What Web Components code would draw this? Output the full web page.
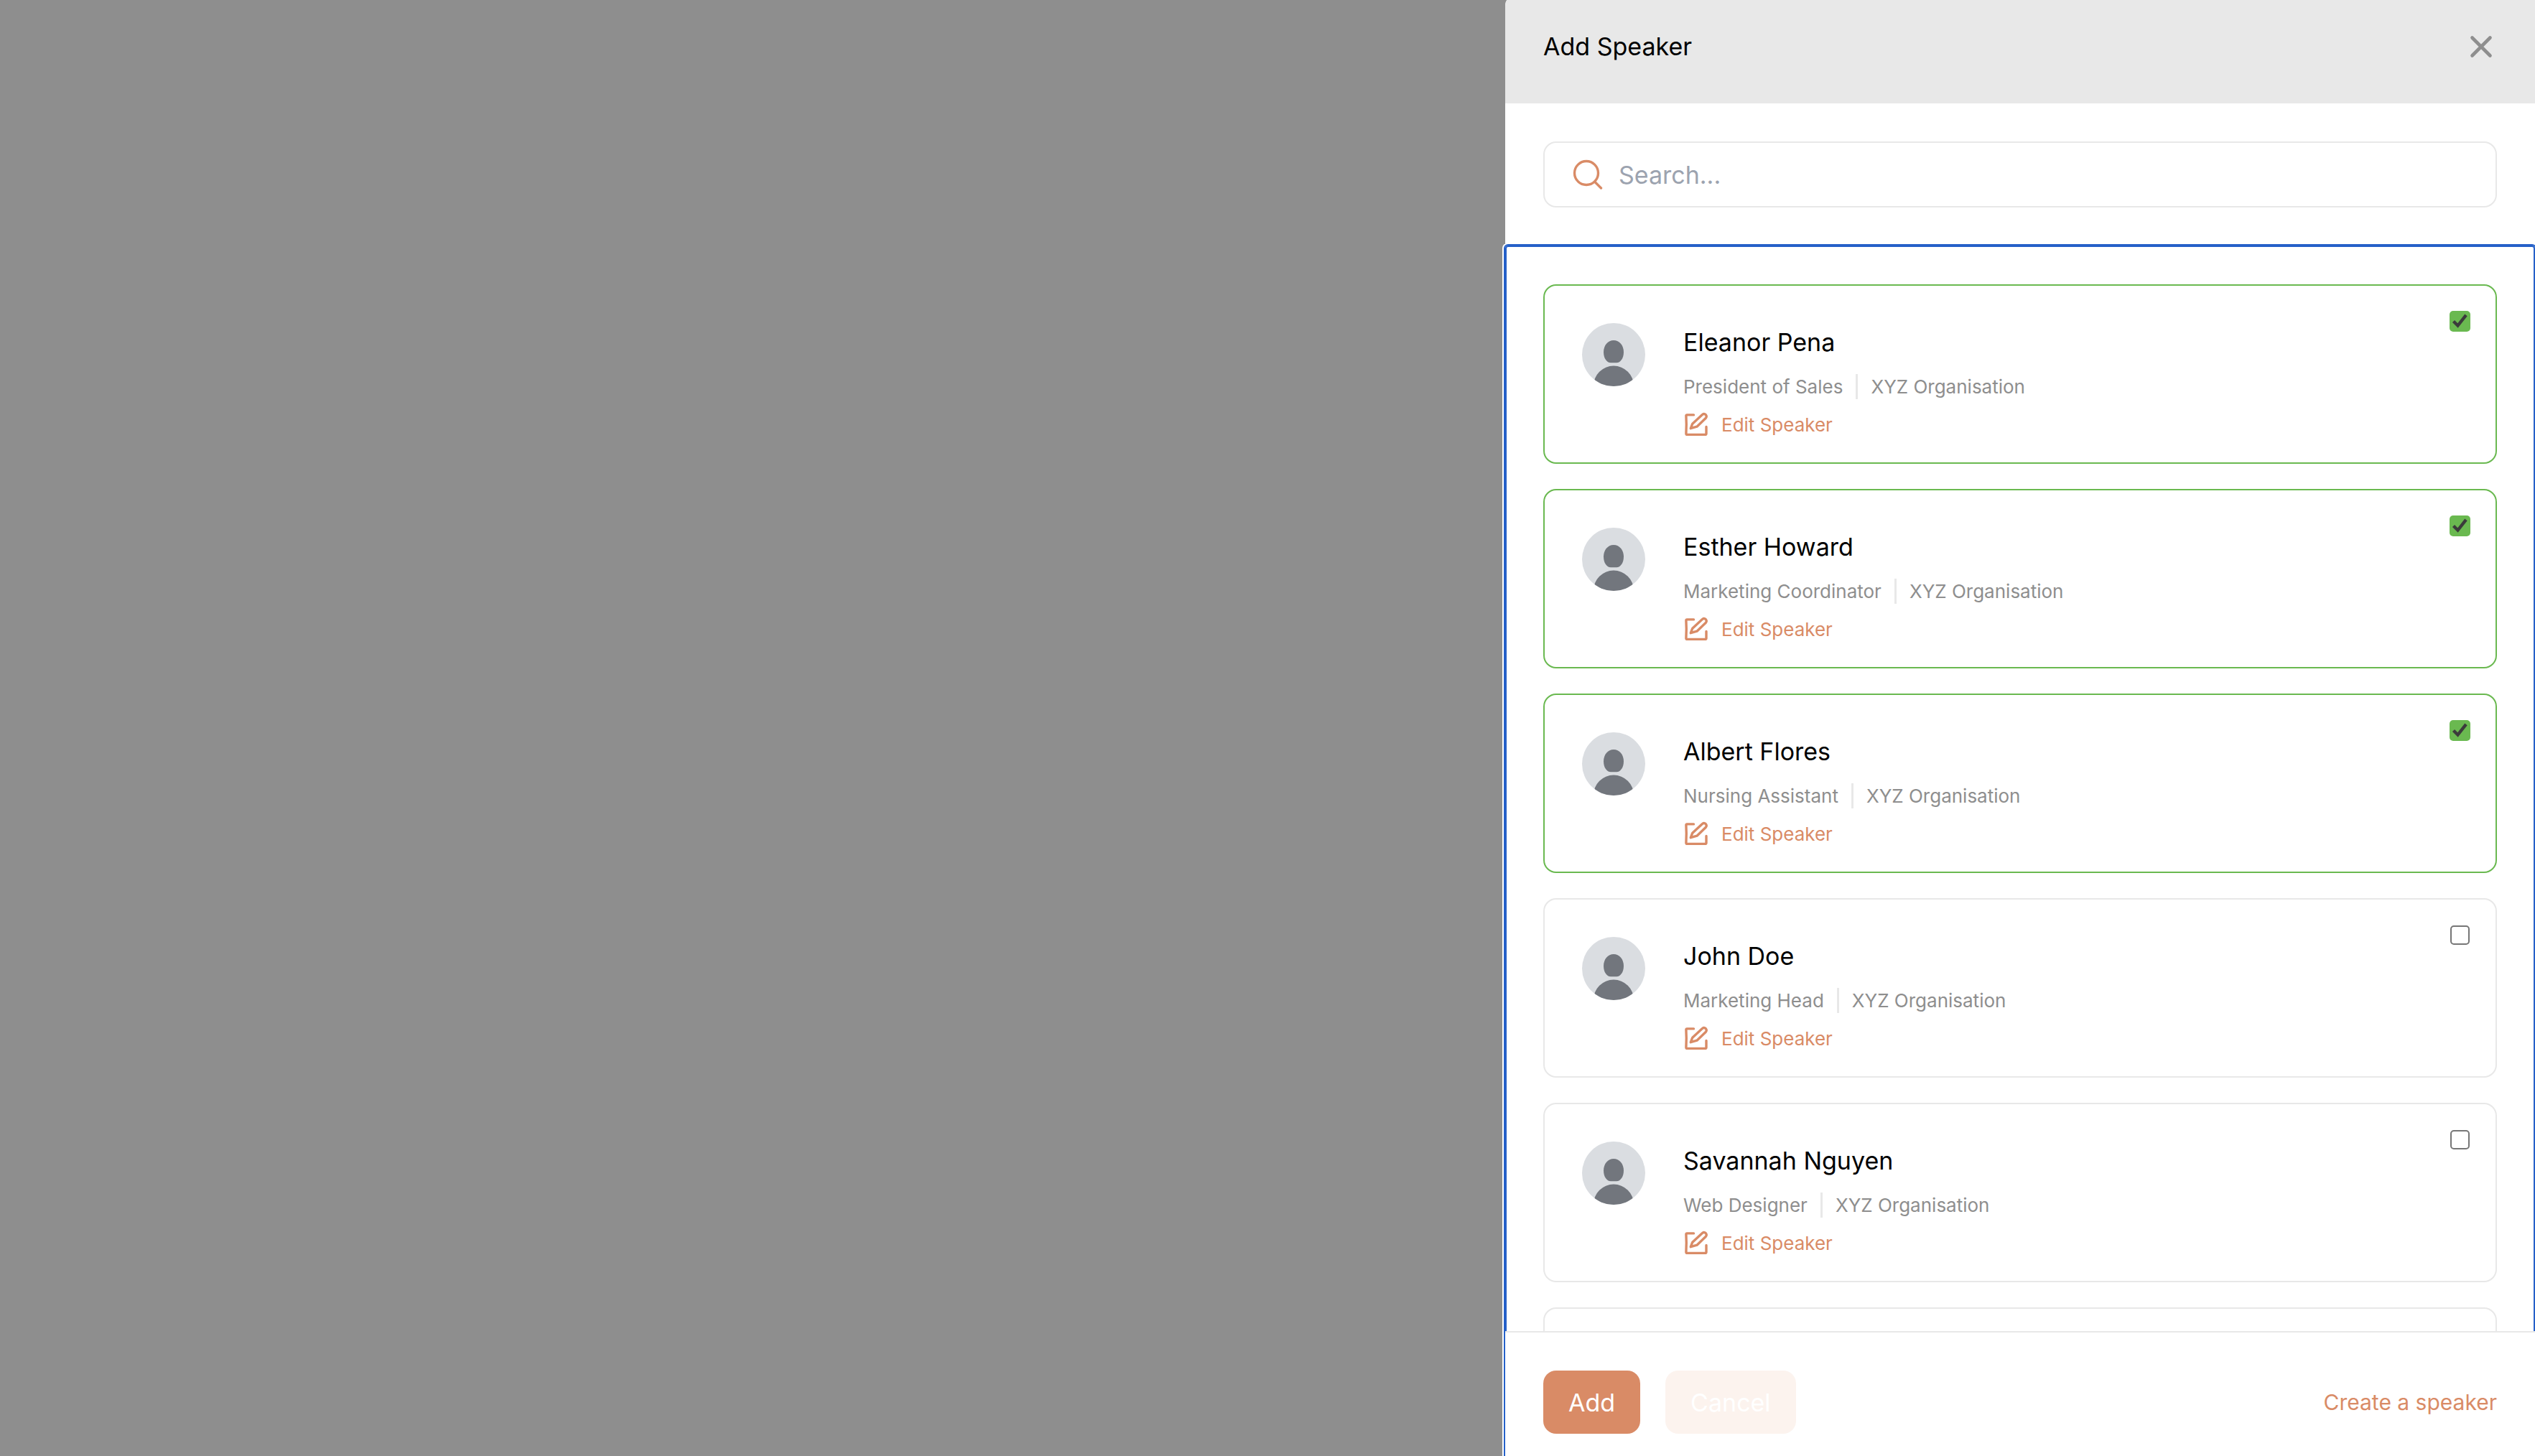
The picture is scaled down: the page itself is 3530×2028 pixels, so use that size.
<!DOCTYPE html>
<html lang="en">
<head>
<meta charset="utf-8">
<title>Add Speaker</title>
<style>
  :root {
    --accent: #d98b66;
    --line: #e8e8e8;
    --muted: #8e8e8e;
    --green: #6ab950;
  }
  html, body { height: 100%; }
  body {
    margin: 0;
    background: #8e8e8e;
    font-family: Inter, "Liberation Sans", sans-serif;
    font-size: 34px;
    color: #000;
  }
</style>
</head>
<body>
<speaker-drawer>
  <drawer-header slot="header">Add Speaker</drawer-header>
  <search-field slot="search"></search-field>
  <speaker-card checked>
    <span slot="name">Eleanor Pena</span><span slot="job">President of Sales</span><span slot="org">XYZ Organisation</span>
  </speaker-card>
  <speaker-card checked>
    <span slot="name">Esther Howard</span><span slot="job">Marketing Coordinator</span><span slot="org">XYZ Organisation</span>
  </speaker-card>
  <speaker-card checked>
    <span slot="name">Albert Flores</span><span slot="job">Nursing Assistant</span><span slot="org">XYZ Organisation</span>
  </speaker-card>
  <speaker-card>
    <span slot="name">John Doe</span><span slot="job">Marketing Head</span><span slot="org">XYZ Organisation</span>
  </speaker-card>
  <speaker-card>
    <span slot="name">Savannah Nguyen</span><span slot="job">Web Designer</span><span slot="org">XYZ Organisation</span>
  </speaker-card>
  <speaker-card-pending></speaker-card-pending>
  <drawer-footer slot="footer"></drawer-footer>
</speaker-drawer>

<script>
function define(name, html, setup) {
  const template = document.createElement('template');
  template.innerHTML = '<style>*{box-sizing:border-box}button,input{font:inherit;margin:0}button{border:0;padding:0;background:none;cursor:pointer}svg{display:block;flex:none}</style>' + html;
  customElements.define(name, class extends HTMLElement {
    constructor() {
      super();
      this.attachShadow({ mode: 'open' }).append(template.content.cloneNode(true));
    }
    connectedCallback() { if (setup) setup(this, this.shadowRoot); }
  });
}

define('speaker-drawer', `
  <style>
    :host { display: grid; grid-template-columns: 1048fr 717fr; height: 100vh; overflow: hidden; }
    .drawer { grid-column: 2; min-width: 0; display: flex; flex-direction: column; background: #fff; border-top-left-radius: 3px 9px; height: 100vh; }
    .search { padding: 53px; }
    .body {
      flex: 1; min-height: 0; display: flex; flex-direction: column; background: #fff;
      border-radius: 4px 4px 0 0;
      box-shadow: 0 0 0 2px #2560c8, 0 0 0 4px #fff, inset 0 0 0 2px #2560c8;
      clip-path: inset(-2px 0 0 -4px);
    }
    .list { flex: 1; min-height: 0; overflow: hidden; display: flex; flex-direction: column; gap: 35px; padding: 54px 53px 0; }
  </style>
  <section class="drawer" role="dialog" aria-label="Add Speaker">
    <slot name="header"></slot>
    <div class="search"><slot name="search"></slot></div>
    <div class="body">
      <div class="list"><slot></slot></div>
      <slot name="footer"></slot>
    </div>
  </section>`);

define('drawer-header', `
  <style>
    :host { display: block; background: var(--line); border-top-left-radius: 3px 9px; }
    header { display: flex; justify-content: space-between; align-items: center; padding: 43px 53px 57px; }
    h1 { margin: 0; font-size: 34px; font-weight: 400; line-height: 44px; }
  </style>
  <header>
    <h1><slot></slot></h1>
    <button type="button" aria-label="Close">
      <svg width="44" height="44" viewBox="0 0 44 44" fill="none" stroke="#8e8e8e" stroke-width="4.6" stroke-linecap="round"><path d="M9.5 9.5l25 25M34.5 9.5l-25 25"/></svg>
    </button>
  </header>`);

define('search-field', `
  <style>
    :host { display: block; }
    label { display: flex; align-items: center; gap: 20px; height: 92px; padding: 0 35px; border: 2px solid var(--line); border-radius: 18px; }
    input { flex: 1; min-width: 0; border: 0; outline: 0; padding: 0; background: none; font-size: 34px; line-height: 53px; color: #000; }
    input::placeholder { color: #9ca3af; opacity: 1; }
  </style>
  <label>
    <svg width="48" height="48" viewBox="0 0 48 48" fill="none" stroke="#d98b66" stroke-width="3.4" stroke-linecap="round"><circle cx="23" cy="22" r="16.5"/><path d="M35 34.5l8.5 8.5"/></svg>
    <input type="text" placeholder="Search..." aria-label="Search speakers">
  </label>`);

define('speaker-card', `
  <style>
    :host { display: block; flex: none; border: 2px solid var(--line); border-radius: 18px; }
    :host([checked]) { border-color: var(--green); }
    article { display: flex; align-items: flex-start; padding: 35px; }
    .avatar { margin: 17px 53px 0 17px; }
    .info { flex: 1; min-width: 0; display: flex; flex-direction: column; align-items: flex-start; gap: 18px; padding-top: 17px; }
    h2 { margin: 0; font-size: 34px; font-weight: 400; line-height: 53px; }
    .meta { display: flex; font-size: 26px; line-height: 35px; color: var(--muted); }
    .org { margin-left: 18px; padding-left: 18px; border-left: 3px solid var(--line); }
    button { display: flex; align-items: center; gap: 18px; font-size: 26px; line-height: 35px; color: var(--accent); }
    .check { display: grid; }
    .check > * { grid-area: 1 / 1; }
    input { appearance: none; width: 27px; height: 27px; margin: 1px; border: 2px solid #767676; border-radius: 5px; background: #fff; }
    input:checked { width: 29px; height: 29px; margin: 0; border: 0; background: var(--green); }
    .tick { visibility: hidden; pointer-events: none; }
    input:checked + .tick { visibility: visible; }
  </style>
  <article>
    <svg class="avatar" width="88" height="88" viewBox="0 0 88 88">
      <defs><clipPath id="disc"><circle cx="44" cy="44" r="44"/></clipPath></defs>
      <g clip-path="url(#disc)">
        <rect width="88" height="88" fill="#dadde1"/>
        <path fill="#72767d" d="M44 24c8 0 14 7 14 16.500C58 49 53.500 55.300 48 55.300h-8C34.500 55.300 30 49 30 40.500 30 31 36 24 44 24z"/>
        <circle cx="44" cy="87.500" r="28" fill="#72767d"/>
      </g>
    </svg>
    <div class="info">
      <h2><slot name="name"></slot></h2>
      <div class="meta"><slot name="job"></slot><span class="org"><slot name="org"></slot></span></div>
      <button type="button">
        <svg width="35" height="35" viewBox="0 0 35 35" fill="none" stroke="#d98b66" stroke-width="3.4" stroke-linecap="round" stroke-linejoin="round"><path d="M14.500 3.900H5Q3.900 3.900 3.900 5L4.300 17L3.900 30Q3.900 31.400 5.300 31.400H30.500Q32 31.400 32 30V20.500"/><path d="M26.500 3.500Q29 1.600 31.200 3.600Q33.200 5.800 31.400 8.200L19 20.200L10.300 22.700L12.800 16.200Z"/></svg>
        <span>Edit Speaker</span>
      </button>
    </div>
    <label class="check">
      <input type="checkbox" aria-label="Select speaker">
      <svg class="tick" width="29" height="29" viewBox="0 0 29 29" fill="none" stroke="#3b3b3b" stroke-width="4.400"><path d="M5.500 14.500l6 6L23 5.800"/></svg>
    </label>
  </article>`, (host, root) => {
  const box = root.querySelector('input');
  box.checked = host.hasAttribute('checked');
  box.addEventListener('change', () => host.toggleAttribute('checked', box.checked));
});

define('speaker-card-pending', `
  <style>:host { display: block; box-sizing: border-box; flex: none; height: 250px; border: 2px solid var(--line); border-radius: 18px; }</style>`);

define('drawer-footer', `
  <style>
    :host { display: block; }
    footer { display: flex; align-items: center; gap: 35px; padding: 53px 53px 31px; border-top: 2px solid var(--line); background: #fff; }
    button { height: 88px; padding: 0 35px; border-radius: 18px; font-size: 34px; color: #fff; background: var(--accent); }
    button.soft { background: #fcf3ee; }
    a { margin-left: auto; font-size: 30px; line-height: 44px; color: var(--accent); text-decoration: none; }
  </style>
  <footer>
    <button type="button">Add</button>
    <button type="button" class="soft">Cancel</button>
    <a href="#create">Create a speaker</a>
  </footer>`);
</script>
</body>
</html>
